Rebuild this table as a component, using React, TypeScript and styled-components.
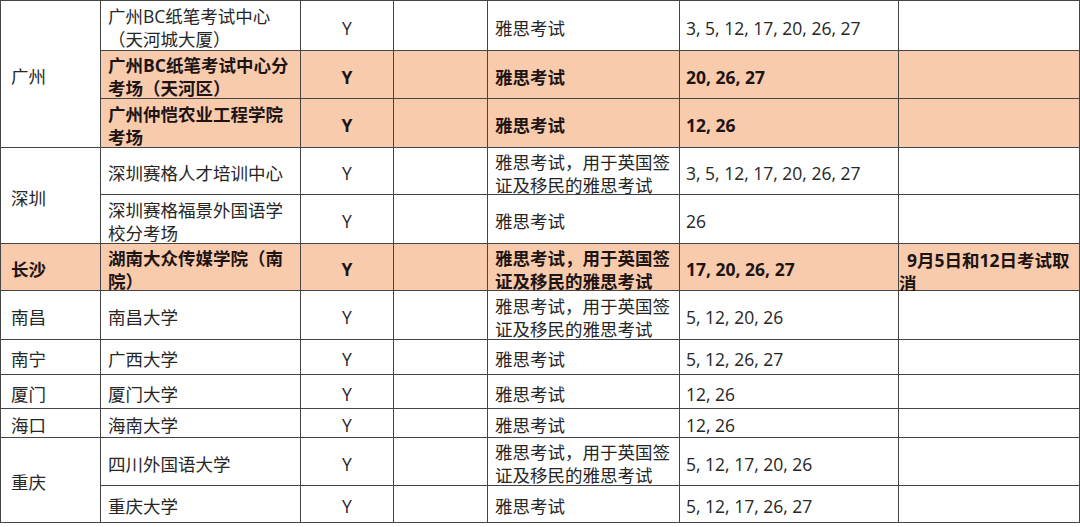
import React from "react";
import styled, { createGlobalStyle } from "styled-components";

const Global = createGlobalStyle`
  html, body { margin: 0; padding: 0; background: #ffffff; }
  body {
    font-family: "Open Sans", "Noto Sans CJK SC", sans-serif;
    color: #222222;
  }
`;

const LINE = "#454545";
const HL = "#f8cbad";

const ROW_HEIGHTS = [50, 48, 49, 47, 49, 47, 49, 35, 34, 29, 48, 37];

const Sheet = styled.div`
  display: grid;
  grid-template-columns: 100px 200px 93px 94px 192px 219px 181px;
  grid-template-rows: ${ROW_HEIGHTS.map((h) => `${h}px`).join(" ")};
  width: 1080px;
  box-sizing: border-box;
  border-top: 1px solid ${LINE};
  border-left: 1px solid ${LINE};
  font-size: 17.5px;
  line-height: 23px;
`;

const Cell = styled.div<{
  $span?: number;
  $hl?: boolean;
  $bold?: boolean;
  $align?: "left" | "center";
  $padL?: number;
  $padT?: number;
}>`
  grid-row: span ${(p) => p.$span ?? 1};
  box-sizing: border-box;
  border-right: 1px solid ${LINE};
  border-bottom: 1px solid ${LINE};
  background: ${(p) => (p.$hl ? HL : "#ffffff")};
  font-weight: ${(p) => (p.$bold ? 700 : 400)};
  color: ${(p) => (p.$bold ? "#1e1414" : "#262626")};
  display: flex;
  flex-direction: column;
  justify-content: center;
  align-items: ${(p) => (p.$align === "center" ? "center" : "flex-start")};
  padding-top: ${(p) => p.$padT ?? 5}px;
  padding-bottom: 0;
  padding-left: ${(p) => (p.$align === "center" ? 0 : p.$padL ?? 7)}px;
  padding-right: ${(p) => (p.$align === "center" ? 0 : 2)}px;
  white-space: nowrap;
  overflow: visible;
`;

const NoteLine = styled.span<{ $indent?: number }>`
  display: block;
  padding-left: ${(p) => p.$indent ?? 0}px;
`;

type Row = {
  city?: { text: string; span: number; hl?: boolean };
  venue: string[];
  hl?: boolean;
  type: string[];
  dates: string;
  note?: string[];
};

const TYPE_SHORT = ["雅思考试"];
const TYPE_LONG = ["雅思考试，用于英国签", "证及移民的雅思考试"];

const rows: Row[] = [
  {
    city: { text: "广州", span: 3 },
    venue: ["广州BC纸笔考试中心", "（天河城大厦）"],
    type: TYPE_SHORT,
    dates: "3, 5, 12, 17, 20, 26, 27",
  },
  {
    venue: ["广州BC纸笔考试中心分", "考场（天河区）"],
    hl: true,
    type: TYPE_SHORT,
    dates: "20, 26, 27",
  },
  {
    venue: ["广州仲恺农业工程学院", "考场"],
    hl: true,
    type: TYPE_SHORT,
    dates: "12, 26",
  },
  {
    city: { text: "深圳", span: 2 },
    venue: ["深圳赛格人才培训中心"],
    type: TYPE_LONG,
    dates: "3, 5, 12, 17, 20, 26, 27",
  },
  {
    venue: ["深圳赛格福景外国语学", "校分考场"],
    type: TYPE_SHORT,
    dates: "26",
  },
  {
    city: { text: "长沙", span: 1, hl: true },
    venue: ["湖南大众传媒学院（南", "院）"],
    hl: true,
    type: TYPE_LONG,
    dates: "17, 20, 26, 27",
    note: ["9月5日和12日考试取", "消"],
  },
  {
    city: { text: "南昌", span: 1 },
    venue: ["南昌大学"],
    type: TYPE_LONG,
    dates: "5, 12, 20, 26",
  },
  {
    city: { text: "南宁", span: 1 },
    venue: ["广西大学"],
    type: TYPE_SHORT,
    dates: "5, 12, 26, 27",
  },
  {
    city: { text: "厦门", span: 1 },
    venue: ["厦门大学"],
    type: TYPE_SHORT,
    dates: "12, 26",
  },
  {
    city: { text: "海口", span: 1 },
    venue: ["海南大学"],
    type: TYPE_SHORT,
    dates: "12, 26",
  },
  {
    city: { text: "重庆", span: 2 },
    venue: ["四川外国语大学"],
    type: TYPE_LONG,
    dates: "5, 12, 17, 20, 26",
  },
  {
    venue: ["重庆大学"],
    type: TYPE_SHORT,
    dates: "5, 12, 17, 26, 27",
  },
];

const Lines = ({ lines }: { lines: string[] }) => (
  <>
    {lines.map((l, i) => (
      <span key={i}>{l}</span>
    ))}
  </>
);

export default function App() {
  return (
    <>
      <Global />
      <Sheet>
        {rows.map((r, i) => (
          <React.Fragment key={i}>
            {r.city && (
              <Cell
                $span={r.city.span}
                $hl={r.city.hl}
                $bold={r.city.hl}
                $padL={10}
              >
                {r.city.text}
              </Cell>
            )}
            <Cell $hl={r.hl} $bold={r.hl}>
              <Lines lines={r.venue} />
            </Cell>
            <Cell $hl={r.hl} $bold={r.hl} $align="center">
              Y
            </Cell>
            <Cell $hl={r.hl} />
            <Cell $hl={r.hl} $bold={r.hl}>
              <Lines lines={r.type} />
            </Cell>
            <Cell $hl={r.hl} $bold={r.hl} $padL={6}>
              {r.dates}
            </Cell>
            <Cell $hl={r.hl} $bold={r.hl} $padL={0} $padT={10}>
              {r.note &&
                r.note.map((l, j) => (
                  <NoteLine key={j} $indent={j === 0 ? 8 : 0}>
                    {l}
                  </NoteLine>
                ))}
            </Cell>
          </React.Fragment>
        ))}
      </Sheet>
    </>
  );
}
